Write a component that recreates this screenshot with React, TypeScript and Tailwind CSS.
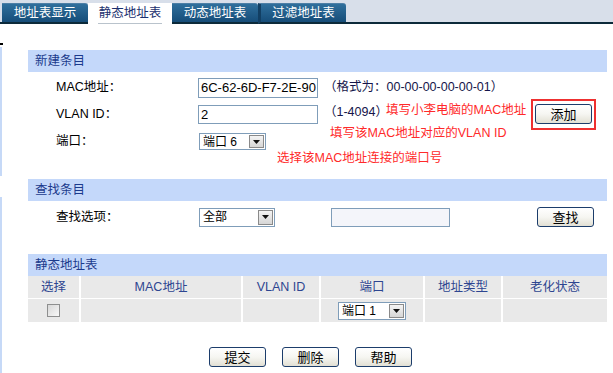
import type { ReactNode } from 'react'

const font = "font-['Liberation_Sans','Noto_Sans_CJK_SC',sans-serif]"

function Tab({ label, active, className = '' }: { label: string; active?: boolean; className?: string }) {
  if (active) {
    return (
      <div className={`h-[21px] flex items-start justify-center bg-white ${className}`}>
        <span className="mt-[2px] h-[19px] px-[1px] border-b border-[#b9c3cc] text-[12.5px] leading-[17px] text-[#1a2f6e]">{label}</span>
      </div>
    )
  }
  return (
    <div
      className={`h-[21px] flex items-center justify-center rounded-tr-[3px] border-t border-[#4d7fa6] border-b-2 border-b-[#0c2a3a] bg-linear-to-b from-[#2f6f9c] to-[#164d79] text-[12.5px] text-white ${className}`}
    >
      {label}
    </div>
  )
}

function Select({ value, className }: { value: string; className: string }) {
  return (
    <div className={`flex items-stretch border border-[#7f9db9] bg-white ${className}`}>
      <span className="flex-1 flex items-center pl-[3px] text-[12px] text-black">{value}</span>
      <span className="w-[15px] m-[1px] flex items-center justify-center border border-[#8a8a8a] bg-linear-to-b from-[#f4f4f4] to-[#d6d6d6]">
        <svg width="7" height="4" viewBox="0 0 7 4">
          <path d="M0 0h7L3.5 4z" fill="#111" />
        </svg>
      </span>
    </div>
  )
}

function Btn({ children }: { children: ReactNode }) {
  return (
    <button className="block w-[57px] h-[20px] rounded-[3px] border border-[#1c3d6b] bg-linear-to-b from-white via-[#f6f6f2] to-[#e2e0d4] text-[13px] leading-none text-black">
      {children}
    </button>
  )
}

function Header({ title }: { title: string }) {
  return (
    <div className="h-[22px] flex items-center pl-[7px] bg-[#c4d8fa] text-[12.5px] text-[#1b3a8c]">{title}</div>
  )
}

export default function App() {
  return (
    <div className={`w-[613px] h-[373px] bg-white overflow-hidden ${font}`}>
      {/* Tabs */}
      <div className="flex items-end h-[24px] bg-[#d8dfea]">
        <div className="w-[2px] h-[2px] bg-[#0c2a3a]" />
        <Tab label="地址表显示" className="w-[86px]" />
        <Tab label="静态地址表" active className="w-[84px]" />
        <Tab label="动态地址表" className="w-[86px]" />
        <Tab label="过滤地址表" className="w-[88px] border-l-[3px] border-l-[#123f63]" />
        <div className="flex-1 h-[2px] bg-[#0c2a3a]" />
      </div>

      <div className="flex">
        {/* left edge strip */}
        <div className="w-[3px] flex flex-col">
          <div className="mt-[19px] h-[2px] bg-black" />
          <div className="mt-[2px] w-[2px] h-[129px] bg-[#c6d9f7]" />
          <div className="mt-[21px] w-[2px] h-[177px] bg-[#c6d9f7]" />
        </div>

        <div className="ml-[25px] w-[579px] pt-[26px]">
          {/* 新建条目 */}
          <Header title="新建条目" />
          <div className="relative flex h-[107px]">
            <div className="flex-1 pt-[2px] pl-[28px] text-[12.5px] text-black">
              <div className="flex items-center h-[27px]">
                <span className="w-[142px]">MAC地址：</span>
                <div className="w-[120px] h-[20px] flex items-center pl-[2px] border border-[#7f9db9] text-[13px]">6C-62-6D-F7-2E-90</div>
                <span className="ml-[6px] text-[#15154a]">（格式为：00-00-00-00-00-01）</span>
              </div>
              <div className="flex items-center h-[27px]">
                <span className="w-[142px]">VLAN ID：</span>
                <div className="w-[120px] h-[19px] flex items-center pl-[2px] border border-[#7f9db9] text-[13px]">2</div>
                <span className="ml-[6px] mb-[4px] text-[#15154a]">（1-4094）</span>
              </div>
              <div className="flex items-center h-[27px]">
                <span className="w-[143px]">端口：</span>
                <Select value="端口 6" className="w-[67px] h-[17px]" />
              </div>
            </div>
            <div className="pt-[27px] pr-[11px]">
              <div className="border-2 border-solid border-[#ee3030] px-[2px] pt-[3px] pb-[4px]">
                <Btn>添加</Btn>
              </div>
            </div>
            {/* annotations */}
            <span className="absolute left-[358px] top-[29px] text-[12.5px] leading-[18px] text-[#ff2a2a]">填写小李电脑的MAC地址</span>
            <span className="absolute left-[302px] top-[52px] text-[12.5px] leading-[18px] text-[#ff2a2a]">填写该MAC地址对应的VLAN ID</span>
            <span className="absolute left-[249px] top-[77px] text-[12.5px] leading-[18px] text-[#ff2a2a]">选择该MAC地址连接的端口号</span>
          </div>

          {/* 查找条目 */}
          <Header title="查找条目" />
          <div className="h-[53px] pt-[5px] pl-[28px] pr-[13px]">
            <div className="flex items-center h-[22px] text-[12.5px] text-black">
              <span className="w-[143px]">查找选项：</span>
              <Select value="全部" className="w-[76px] h-[19px]" />
              <div className="ml-[56px] w-[119px] h-[19px] border border-[#7f9db9] bg-[#f4f5fa]" />
              <div className="ml-auto">
                <Btn>查找</Btn>
              </div>
            </div>
          </div>

          {/* 静态地址表 */}
          <Header title="静态地址表" />
          <div className="grid grid-cols-[51px_160px_76px_102px_76px_104px] gap-x-[2px] gap-y-[1px] bg-white text-[12.5px] text-[#2d4590]">
            {['选择', 'MAC地址', 'VLAN ID', '端口', '地址类型', '老化状态'].map(h => (
              <div key={h} className="h-[22px] flex items-center justify-center bg-[#e9e9e9]">{h}</div>
            ))}
            <div className="h-[23px] flex items-center justify-center bg-[#e9e9e9]">
              <div className="w-[13px] h-[13px] border border-[#8e8f8f] bg-linear-to-br from-[#d8d8d8] to-[#f8f8f8]" />
            </div>
            <div className="h-[23px] bg-[#e9e9e9]" />
            <div className="h-[23px] bg-[#e9e9e9]" />
            <div className="h-[23px] flex items-center justify-center bg-[#e9e9e9]">
              <Select value="端口 1" className="w-[68px] h-[18px]" />
            </div>
            <div className="h-[23px] bg-[#e9e9e9]" />
            <div className="h-[23px] bg-[#e9e9e9]" />
          </div>

          <div className="flex gap-[16px] pl-[181px] mt-[25px]">
            <Btn>提交</Btn>
            <Btn>删除</Btn>
            <Btn>帮助</Btn>
          </div>
        </div>
      </div>
    </div>
  )
}
